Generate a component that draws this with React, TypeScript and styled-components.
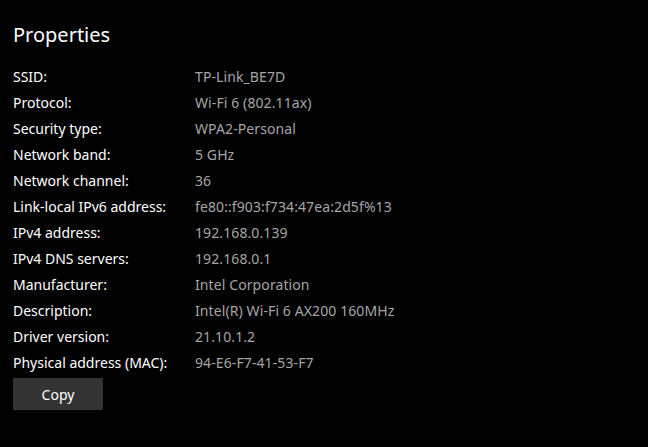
import { Fragment } from "react";
import styled, { createGlobalStyle } from "styled-components";

const GlobalStyle = createGlobalStyle`
  html, body {
    margin: 0;
    padding: 0;
    background: #000000;
  }
  body {
    font-family: "Segoe UI", "Noto Sans", "Liberation Sans", sans-serif;
  }
`;

const Page = styled.div`
  width: 648px;
  height: 447px;
  background: #000000;
  padding: 21px 13px 0;
  box-sizing: border-box;
  overflow: hidden;
`;

const Title = styled.h2`
  margin: 0 0 15px;
  font-size: 20px;
  font-weight: 400;
  color: #ffffff;
  line-height: 28px;
`;

const List = styled.dl`
  display: grid;
  grid-template-columns: 182px auto;
  grid-auto-rows: 26px;
  margin: 0;
  font-size: 14px;
  line-height: 26px;
`;

const Label = styled.dt`
  color: #ffffff;
  white-space: nowrap;
`;

const Value = styled.dd`
  margin: 0;
  color: #a6a6a6;
  white-space: nowrap;
  letter-spacing: 0.1px;
`;

const Button = styled.button`
  margin-top: 2px;
  width: 90px;
  height: 32px;
  border: none;
  background: #333333;
  color: #ffffff;
  font-family: inherit;
  font-size: 14px;
  padding: 0;
  cursor: pointer;
`;

const rows: [string, string][] = [
  ["SSID:", "TP-Link_BE7D"],
  ["Protocol:", "Wi-Fi 6 (802.11ax)"],
  ["Security type:", "WPA2-Personal"],
  ["Network band:", "5 GHz"],
  ["Network channel:", "36"],
  ["Link-local IPv6 address:", "fe80::f903:f734:47ea:2d5f%13"],
  ["IPv4 address:", "192.168.0.139"],
  ["IPv4 DNS servers:", "192.168.0.1"],
  ["Manufacturer:", "Intel Corporation"],
  ["Description:", "Intel(R) Wi-Fi 6 AX200 160MHz"],
  ["Driver version:", "21.10.1.2"],
  ["Physical address (MAC):", "94-E6-F7-41-53-F7"],
];

export default function App() {
  return (
    <>
      <GlobalStyle />
      <Page>
        <Title>Properties</Title>
        <List>
          {rows.map(([k, v]) => (
            <Fragment key={k}>
              <Label>{k}</Label>
              <Value>{v}</Value>
            </Fragment>
          ))}
        </List>
        <Button>Copy</Button>
      </Page>
    </>
  );
}
